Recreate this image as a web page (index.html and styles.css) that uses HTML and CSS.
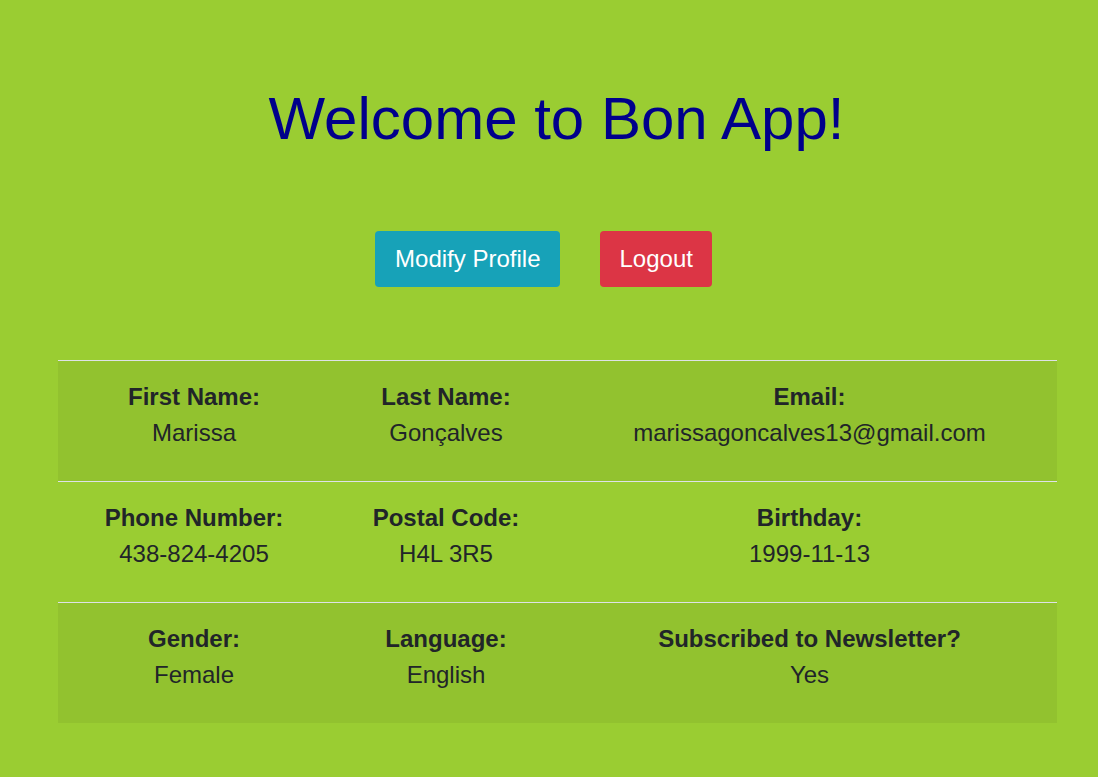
FILE: index.html
```html
<!DOCTYPE html>
<html lang="en">
<head>
<meta charset="utf-8">
<title>Bon App</title>
<link rel="stylesheet" href="styles.css">
</head>
<body>
<div class="page">
  <h1 class="title">Welcome to Bon App!</h1>
  <div class="actions">
    <button class="btn btn-info" type="button">Modify Profile</button>
    <button class="btn btn-danger" type="button">Logout</button>
  </div>
  <table class="profile">
    <colgroup>
      <col class="c1"><col class="c2"><col class="c3">
    </colgroup>
    <tbody>
      <tr class="striped">
        <td><strong>First Name:</strong><span>Marissa</span></td>
        <td><strong>Last Name:</strong><span>Gonçalves</span></td>
        <td><strong>Email:</strong><span>marissagoncalves13@gmail.com</span></td>
      </tr>
      <tr>
        <td><strong>Phone Number:</strong><span>438-824-4205</span></td>
        <td><strong>Postal Code:</strong><span>H4L 3R5</span></td>
        <td><strong>Birthday:</strong><span>1999-11-13</span></td>
      </tr>
      <tr class="striped">
        <td><strong>Gender:</strong><span>Female</span></td>
        <td><strong>Language:</strong><span>English</span></td>
        <td><strong>Subscribed to Newsletter?</strong><span>Yes</span></td>
      </tr>
    </tbody>
  </table>
</div>
</body>
</html>
```

FILE: styles.css
```css
html, body {
  margin: 0;
  padding: 0;
}
body {
  background: #9acd32;
  font-family: "Liberation Sans", Arial, sans-serif;
  color: #212529;
}
.page {
  display: flex;
  flex-direction: column;
  padding-top: 83px;
}
.title {
  margin: 0;
  padding-left: 15px;
  text-align: center;
  font-weight: 400;
  font-size: 60px;
  line-height: 72px;
  color: #00008b;
}
.actions {
  display: flex;
  justify-content: center;
  gap: 40px;
  margin-top: 76px;
  padding-right: 11px;
}
.btn {
  font-family: "Liberation Sans", Arial, sans-serif;
  font-size: 24px;
  line-height: 36px;
  padding: 10px 20px;
  border: 0;
  border-radius: 4px;
  color: #fff;
  cursor: pointer;
}
.btn-info { background: #17a2b8; }
.btn-danger {
  background: #dc3545;
  padding-left: 19px;
  padding-right: 19px;
}
.profile {
  margin: 73px 0 0 58px;
  width: 999px;
  border-collapse: collapse;
  table-layout: fixed;
}
.c1 { width: 272px; }
.c2 { width: 232px; }
.c3 { width: 495px; }
.profile td {
  border-top: 1px solid #dee2e6;
  padding: 18px 0 30px;
  text-align: center;
  font-size: 24px;
  line-height: 36px;
  vertical-align: top;
}
.profile td strong,
.profile td span {
  display: block;
}
.profile td strong {
  font-weight: 700;
}
.striped td {
  background: rgba(0, 0, 0, 0.05);
}
```
